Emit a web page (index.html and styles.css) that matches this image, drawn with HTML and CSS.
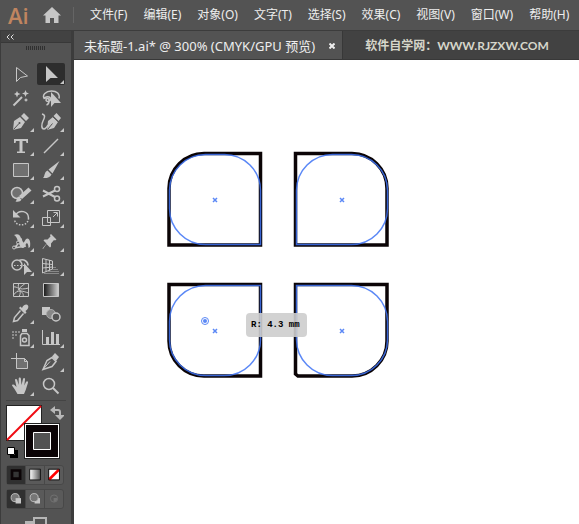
FILE: index.html
```html
<!DOCTYPE html>
<html lang="zh-CN">
<head>
<meta charset="utf-8">
<title>未标题-1.ai</title>
<link rel="stylesheet" href="styles.css">
</head>
<body>
<header class="menubar">
  <span class="logo">Ai</span>
  <button class="home" aria-label="主页"><svg width="18" height="16" viewBox="0 0 18 16"><path d="M9 0 0 8.500h2.500V16h4.500v-5h4v5h4.500V8.500H18z"/></svg></button>
  <nav class="menus">
    <button>文件(F)</button><button>编辑(E)</button><button>对象(O)</button><button>文字(T)</button><button>选择(S)</button><button>效果(C)</button><button>视图(V)</button><button>窗口(W)</button><button>帮助(H)</button>
  </nav>
</header>
<div class="workspace">
  <aside class="toolbox">
    <button class="collapse" aria-label="折叠"><svg width="8" height="6" viewBox="0 0 8 6"><path d="M3.500.5 1 3l2.500 2.500M7.500.5 5 3l2.500 2.500"/></svg></button>
    <div class="grip"></div>
    <div class="tools">
      <button aria-label="选择"><svg viewBox="0 0 28 22"><path class="l" d="M9.500 4.500v14l4-4 7-1.500z"/></svg></button>
      <button class="active" aria-label="直接选择"><svg viewBox="0 0 28 22"><path d="M9 3v16l4.500-4H21zM27 17v4h-4z"/></svg></button>

      <button aria-label="魔棒"><svg viewBox="0 0 28 22"><path class="l w2" d="m6.500 18.500 8.500-8.500"/><path d="m10 4 1 2 2.500 1-2.500 1-1 2.500L9 8 7 7l2-1zM18.500 3l1 2.500L22 6.500l-2.500 1-1 2.500-1-2.500-2.500-1 2.500-1zM19 11l.7 1.300L21 13l-1.300.7L19 15l-.7-1.300L17 13l1.300-.7z"/></svg></button>
      <button aria-label="套索"><svg viewBox="0 0 28 22"><path class="l w15" d="M7.500 12C4.500 8 9 4 14.500 4S23 7 22 11.500M7.500 12c.5-3 6-3 6 0s-4.500 3-4.500 1 3-2 3 0 .5 4-2.500 5"/><path d="M14 5v15l3.500-4H24z"/></svg></button>

      <button aria-label="钢笔"><svg viewBox="0 0 28 22"><path d="m6 19 1-9 6-4 5 5-4 6zM14 5l3-3 5 5-3 3zM27 17v4h-4z"/><path class="cut" d="m6.500 18.500 5.500-6M13.500 5.500l5 5"/><circle class="hole" cx="12.500" cy="12" r="1"/></svg></button>
      <button aria-label="曲率"><svg viewBox="0 0 28 22"><path d="m10 19 1-9 5-4 5 5-4 6zM16.500 5l3-3 4.500 5-2.500 3z"/><path class="l w15" d="M5 3c4 1 2.500 4 1 7s-2 8 1 8c2 0 3-2 4-4"/><path class="cut" d="m10.500 18.500 5-6M15.500 5.500l5.500 5"/><path d="M27 17v4h-4z"/></svg></button>

      <button aria-label="文字"><svg viewBox="0 0 28 22"><path d="M7 4h14v4h-1.500L19 6h-3.500v10.500H18V18h-8v-1.500h2.500V6H9l-.5 2H7zM27 17v4h-4z"/></svg></button>
      <button aria-label="直线段"><svg viewBox="0 0 28 22"><path class="l w15" d="M7 18 21 4"/><path d="M27 17v4h-4z"/></svg></button>

      <button aria-label="矩形"><svg viewBox="0 0 28 22"><path class="l g" d="M6.500 4.500h15v13h-15z"/><path d="M27 17v4h-4z"/></svg></button>
      <button aria-label="画笔"><svg viewBox="0 0 28 22"><path d="M22.500 2 11.500 10.500l4 4zM10.500 11.500l4 4c-1.500 3-5 4-8.500 3.500 2-1.500 1-6 4.500-7.500zM27 17v4h-4z"/></svg></button>

      <button aria-label="斑点画笔"><svg viewBox="0 0 28 22"><circle class="l g w15" cx="10" cy="10" r="5.500"/><path d="m21.500 4.500 3 3-9.500 8.500-3-3zM11.500 13.500l3 3c-1 2-3 2.500-6 2 1.500-1 1-4 3-5zM27 17v4h-4z"/></svg></button>
      <button aria-label="剪刀"><svg viewBox="0 0 28 22"><circle class="l w15" cx="20" cy="6" r="2.500"/><circle class="l w15" cx="20" cy="15.500" r="2.500"/><path class="l w2" d="m18 7.500-12 6M18 14 6 7.500"/><path d="M27 17v4h-4z"/></svg></button>

      <button aria-label="旋转"><svg viewBox="0 0 28 22"><path class="l w15" d="M8.500 8c4-6 13-4 13 3"/><path class="l w15 dots" d="M21.500 11c0 9-14 9-14 1"/><path d="M6 3v7.500h7.500zM27 17v4h-4z"/></svg></button>
      <button aria-label="比例缩放"><svg viewBox="0 0 28 22"><path class="l" d="M10.500 3.500h12v12h-12zM5.500 10.500h8v8h-8z"/><path class="l" d="m16 10 4-4M16.500 5.500h4v4"/><path d="M27 17v4h-4z"/></svg></button>

      <button aria-label="宽度"><svg viewBox="0 0 28 22"><path d="M7 4c4-2 6 0 7 3l2 4c1 2 2-2 3-3 3-2 5 2 4 8l-1.500 1c0-5-2-6-3-3-1 4-4 4-6 0l-2-5c-1-3-2-4-3.500-5z"/><path class="l w15" d="M7 16c5 0 3-7 8-8m-8 9 12-2"/><circle class="l ring" cx="7" cy="16.500" r="1.500"/><circle class="l ring" cx="11" cy="11.500" r="1.500"/><path d="M27 17v4h-4z"/></svg></button>
      <button aria-label="操控变形"><svg viewBox="0 0 28 22"><path d="m14 3 5.500 5.500-1.500 1-1-.5-3 3.500v3l-1 1-3.500-3.500L6 18l-.5-.5 4-5L6.500 9.500l1-1h3L13.500 5.500 13 4z"/><path d="M27 17v4h-4z"/></svg></button>

      <button aria-label="形状生成器"><svg viewBox="0 0 28 22"><circle class="l w15" cx="10" cy="10" r="5"/><path class="l w15" d="M12 5.500c5-2 9 1 9 5"/><path class="l dots" d="M7 10.500h10"/><path d="M17 8v12l3-3h5zM27 17v4h-4z"/></svg></button>
      <button aria-label="透视网格"><svg viewBox="0 0 28 22"><path class="l" d="M5.500 3.500 15.500 6v8l-10 4zM9 4v12.500M12.500 5v10.500M5.500 8.500l10 1M5.500 13l10-1"/><path class="l dim" d="M16 12.500h3M15 14.500h6M11 16.500h11M7 18.500h15"/><path d="M27 17v4h-4z"/></svg></button>

      <button aria-label="网格"><svg viewBox="0 0 28 22"><path class="l" d="M6.500 4.500h15v13h-15z"/><path class="l" d="M12 4.500c-3 4 4 7 0 13M6.500 8c4-1 5 4 15 1M6.500 16c4-6 9-4 15-2M18 4.500c-3 3-5 3-7 7M16 17.500c1-3-1-4-3-6"/></svg></button>
      <button aria-label="渐变"><svg viewBox="0 0 28 22"><defs><linearGradient id="ramp"><stop stop-color="#161616"/><stop offset="1" stop-color="#d0d0d0"/></linearGradient></defs><path class="ramp" d="M6.500 4.500h15v13h-15z"/></svg></button>

      <button aria-label="吸管"><svg viewBox="0 0 28 22"><path d="M15 5c2-4 5-4 6-2.500s0 4-2.500 5.500l1 1.500L18 11l-6-6 1.500-1.500z"/><path class="l w15" d="m13.500 7.500-6 7-1 4 4-1 6-7"/><path d="M27 17v4h-4z"/></svg></button>
      <button aria-label="混合"><svg viewBox="0 0 28 22"><path d="M5 4h8v8H5z"/><circle class="mid" cx="14" cy="11" r="4.500"/><circle class="l ring w15" cx="19" cy="14" r="4"/></svg></button>

      <button aria-label="符号喷枪"><svg viewBox="0 0 28 22"><path class="soft" d="M5 4h2v2H5zM8 4h2v2H8zM11 4h2v2h-2zM5 7h2v2H5zM8 7h2v2H8zM5 10h2v2H5z"/><path d="M15 2h5v3h-5z"/><path class="l w15" d="M13.500 8.500 15 6.500h5l2 2v10h-8.500z"/><circle class="l w15" cx="17.500" cy="13" r="2"/><path d="M27 17v4h-4z"/></svg></button>
      <button aria-label="柱形图"><svg viewBox="0 0 28 22"><path class="l" d="M5.500 3v14.500H23"/><path d="M9 10h3v7H9zM14 5h3v12h-3zM19 7h3v10h-3zM27 17v4h-4z"/></svg></button>

      <button aria-label="画板"><svg viewBox="0 0 28 22"><path class="l g" d="M9.500 7.500h8l3 3v7h-11z"/><path class="l" d="M9.500 2v5.500M4 7.500h6M17.500 7.500v3h3"/></svg></button>
      <button aria-label="切片"><svg viewBox="0 0 28 22"><path class="l w15" d="m6 18.500 4-9 5-3 4 4-4 5z"/><path d="m15 5.500 3-3.500 4 4-3 4z"/><path class="l" d="m6 18.500 7-8"/><path d="M27 17v4h-4z"/></svg></button>

      <button aria-label="抓手"><svg viewBox="0 0 28 22"><path d="m10.500 19-3-5L5 10.500c0-1.500 2-1.500 3 0l1.500 1.500L8 5c0-1.500 1.800-1.500 2.200 0l1.500 5V3.500c0-1.500 2-1.500 2.200 0L14.500 10 16 4c.5-1.500 2.200-1 2 .5l-.7 6L19 7c.7-1.300 2.300-.7 2 .8l-2.300 7.200L17 19zM27 17v4h-4z"/></svg></button>
      <button aria-label="缩放"><svg viewBox="0 0 28 22"><circle class="l w15" cx="12" cy="9" r="5.500"/><path class="l w2" d="m16 13 5.500 5.500"/></svg></button>
    </div>
    <div class="colors">
      <svg width="60" height="56" viewBox="0 0 60 56" role="img" aria-label="填色和描边">
        <path fill="#222" d="M2 1h36v36H2z"/><path fill="#fff" d="M3 2h34v34H3z"/><path stroke="#f00b12" stroke-width="2" d="M3 36 37 2"/>
        <path fill="#222" d="M20 19h36v36H20z"/><path fill="#fff" d="M21 20h34v34H21z"/><path fill="#0b0406" d="M22 21h32v32H22z"/><path fill="#535353" stroke="#fff" d="M29.500 28.500h17v17h-17z"/>
        <path fill="none" stroke="#b8b8b8" stroke-width="2" d="M50 6h4q2 0 2 2v4"/><path fill="#b8b8b8" d="M51 2v8l-5-4zM51 11h10l-5 5z"/>
        <path fill="#fff" stroke="#000" stroke-width="3" d="M7.500 47.500h5v5h-5z"/><path fill="#fff" stroke="#000" d="M3.500 43.500h7v7h-7z"/>
      </svg>
    </div>
    <div class="modes">
      <button class="on" aria-label="颜色"><svg viewBox="0 0 20 20"><path fill="#353535" stroke="#0b0406" stroke-width="3" d="M5 5h9v9H5z"/></svg></button>
      <button aria-label="渐变填色"><svg viewBox="0 0 20 20"><defs><linearGradient id="fade"><stop stop-color="#fff"/><stop offset="1" stop-color="#555"/></linearGradient></defs><path fill="url(#fade)" stroke="#111" d="M3.500 3.500h12v12h-12z"/></svg></button>
      <button aria-label="无"><svg viewBox="0 0 20 20"><path fill="#fff" d="M4 4h11v11H4z"/><path stroke="#f00" stroke-width="3" d="M4 15 15 4"/><path fill="none" stroke="#111" d="M3.500 3.500h12v12h-12z"/></svg></button>
    </div>
    <div class="modes">
      <button class="on" aria-label="正常绘图"><svg viewBox="0 0 20 20"><circle cx="8.500" cy="8.500" r="4.500" fill="#777" stroke="#c6c6c6"/><path fill="#c6c6c6" d="M9 9h6v6H9z"/></svg></button>
      <button aria-label="背面绘图"><svg viewBox="0 0 20 20"><path fill="#c6c6c6" d="M9 9h6v6H9z"/><circle cx="8.500" cy="8.500" r="4.500" fill="#777" stroke="#c6c6c6"/></svg></button>
      <button aria-label="内部绘图"><svg viewBox="0 0 20 20"><circle cx="9.500" cy="9.500" r="4" fill="none" stroke="#737373"/><path fill="#737373" d="M9 9h4v2l-2 2H9z"/></svg></button>
    </div>
    <button class="screen" aria-label="屏幕模式"><svg width="22" height="12" viewBox="0 0 22 12"><path fill="#b5b5b5" d="M0 4h16v8H0z"/><path fill="#535353" stroke="#b5b5b5" stroke-width="2" d="M9 1h12v10H9z"/></svg></button>
  </aside>
  <main class="document">
    <div class="tabs">
      <div class="tab"><span>未标题-1.ai* @ 300% (CMYK/GPU 预览)</span><button class="close" aria-label="关闭"><svg width="6" height="6" viewBox="0 0 6 6"><path d="m.5.5 5 5m0-5-5 5"/></svg></button></div>
      <div class="site">软件自学网：WWW.RJZXW.COM</div>
    </div>
    <div class="canvas">
      <svg class="art" width="400" height="340" viewBox="74 60 400 340" role="img" aria-label="四个圆角矩形">
        <defs><path id="cross" d="m-2-2 4 4m0-4-4 4"/></defs>
        <g class="ink">
          <path d="M204 153.500h56.500V245H169v-56.500a35 35 0 0 1 35-35z"/>
          <path d="M295.500 153.500H352a35 35 0 0 1 35 35V245h-91.500z"/>
          <path d="M169 284.500h91.500V376H204a35 35 0 0 1-35-35z"/>
          <path d="M295.500 284.500H387V341a35 35 0 0 1-35 35h-54l-2.500-2z"/>
        </g>
        <g class="guide">
          <path d="M205.500 154.500h19a36 36 0 0 1 36 36v54h-55a36 36 0 0 1-36-36v-18a36 36 0 0 1 36-36z"/>
          <path d="M332.500 154.500h19a36 36 0 0 1 36 36v18a36 36 0 0 1-36 36h-55v-54a36 36 0 0 1 36-36z"/>
          <path d="M205.500 285.500h55v54a36 36 0 0 1-36 36h-19a36 36 0 0 1-36-36v-18a36 36 0 0 1 36-36z"/>
          <path d="M296.500 285.500h55a36 36 0 0 1 36 36v18a36 36 0 0 1-36 36h-19a36 36 0 0 1-36-36z"/>
          <use href="#cross" x="215" y="200"/><use href="#cross" x="342" y="200"/><use href="#cross" x="215" y="331"/><use href="#cross" x="342" y="331"/>
          <circle class="thin" cx="205" cy="321" r="3.500"/><circle class="dot" cx="205" cy="321" r="2"/>
        </g>
      </svg>
      <div class="tip">R: 4.3 mm</div>
    </div>
  </main>
</div>
</body>
</html>
```
FILE: styles.css
```css
* { box-sizing: border-box; }
body {
  margin: 0;
  height: 100vh;
  display: flex;
  flex-direction: column;
  overflow: hidden;
  background: #535353;
  color: #eee;
  font: 12px/16px "Noto Sans", "Noto Sans CJK SC", sans-serif;
}
button {
  padding: 0;
  border: 0;
  background: none;
  color: inherit;
  font: inherit;
}
svg { display: block; }

.menubar {
  flex: none;
  display: flex;
  align-items: center;
  height: 31px;
  padding-left: 8px;
  border-bottom: 1px solid #3c3c3c;
}
.logo {
  width: 35px;
  color: #c08560;
  font: 600 22px/28px "Open Sans", sans-serif;
}
.home { fill: #c6c6c6; }
.menus {
  display: flex;
  gap: 16px;
  margin-left: 12px;
  padding-left: 16px;
  border-left: 1px solid #656565;
  white-space: nowrap;
}

.workspace {
  flex: 1;
  display: flex;
  min-height: 0;
}
.toolbox {
  flex: none;
  width: 74px;
  border-left: 1px solid #3c3c3c;
  border-right: 3px solid #3c3c3c;
  overflow: hidden;
}
.collapse {
  display: flex;
  align-items: center;
  width: 100%;
  height: 12px;
  padding-left: 5px;
  background: #424242;
  border-bottom: 1px solid #383838;
  fill: none;
  stroke: #ddd;
}
.grip {
  width: 19px;
  height: 4px;
  margin: 3px auto 13px 25px;
  background: repeating-linear-gradient(90deg, #303030 0 1px, #535353 1px 2px);
}
.tools {
  display: grid;
  grid-template-columns: 28px 28px;
  gap: 2px;
  padding: 0 6px;
}
.tools button {
  height: 22px;
  border-radius: 2px;
}
.tools .active { background: #2d2d2d; }
.tools svg {
  width: 28px;
  height: 22px;
  fill: #c6c6c6;
}
.tools .l {
  fill: none;
  stroke: #c6c6c6;
}
.tools .g { fill: #707070; }
.tools .w15 { stroke-width: 1.5; }
.tools .w2 { stroke-width: 2; }
.tools .dots { stroke-dasharray: 1.5 1.5; }
.tools .dim { stroke: #888; }
.tools .soft { fill: #8c8c8c; }
.tools .cut { stroke: #535353; fill: none; }
.tools .hole { fill: #535353; }
.tools .mid { fill: #888; stroke: #aaa; }
.tools .ring { fill: #535353; }
.tools .ramp { fill: url(#ramp); stroke: #c6c6c6; }

.colors {
  margin: 3px 5px 0;
  padding: 3px 0 5px;
  border-top: 1px solid #444;
}
.colors svg { margin-left: -2px; }
.modes {
  display: flex;
  width: 58px;
  margin: 0 0 4px 5px;
  border: 1px solid #484848;
  border-radius: 3px;
  background: #5a5a5a;
}
.modes button {
  flex: 1;
  height: 18px;
  overflow: hidden;
  border-right: 1px solid #484848;
}
.modes button:last-child { border: 0; }
.modes .on { background: #303030; }
.modes svg {
  width: 19px;
  height: 18px;
}
.screen {
  display: block;
  margin: 8px 0 0 24px;
}

.document {
  flex: 1;
  display: flex;
  flex-direction: column;
  min-width: 0;
}
.tabs {
  flex: none;
  display: flex;
  height: 29px;
  background: #424242;
  border-bottom: 1px solid #383838;
  white-space: nowrap;
}
.tab {
  display: flex;
  align-items: center;
  gap: 14px;
  padding: 1px 7px 0 10px;
  background: #535353;
  border-right: 1px solid #383838;
  font-size: 13px;
}
.close svg {
  stroke: #eee;
  stroke-width: 2;
}
.site {
  align-self: center;
  margin-left: 22px;
  padding-top: 1px;
  color: #d6d6ca;
  font: bold 12px/16px Lato, "Noto Sans CJK SC", sans-serif;
}
.canvas {
  position: relative;
  flex: 1;
  overflow: hidden;
  background: #fff;
}
.ink { fill: none; stroke: #0b0406; stroke-width: 3.5; }
.guide { fill: none; stroke: #3f74f5; stroke-width: 1.5; opacity: 0.85; }
.guide .thin { stroke-width: 1; }
.guide .dot { fill: #3f74f5; stroke: none; }
.tip {
  position: absolute;
  left: 172px;
  top: 253px;
  padding: 4px 7px 4px 5px;
  border-radius: 4px;
  background: rgba(205, 205, 205, 0.9);
  color: #000;
  font: bold 9px/16px "Liberation Mono", monospace;
}
```
